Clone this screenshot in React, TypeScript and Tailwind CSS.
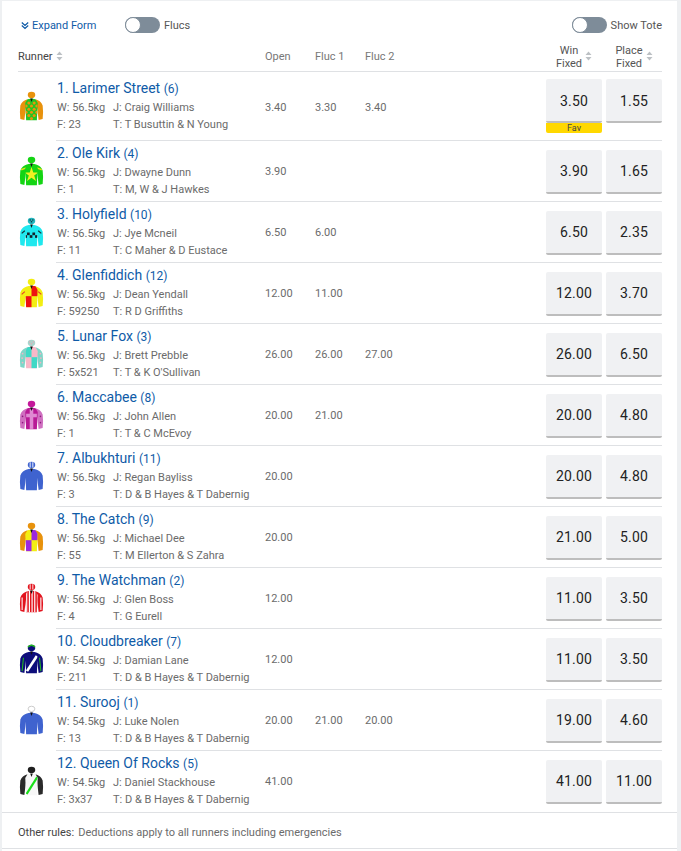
import React from 'react';

const BLUE = '#0f5ba7';

const Stripes = ({ color }: { color: string }) => (
  <>
    {[8, 11, 14, 17, 20].map((x) => (
      <rect key={x} x={x} y="8" width="1.3" height="26" fill={color} />
    ))}
  </>
);

const TORSO = 'M9.5 9 L14 8 L18.5 9 L21 13 L20 32.5 L8 32.5 L7 13 Z';

// racing silk: cap, two sleeves, torso; the torso pattern goes in as children
const Silk = ({ id, cap, capInner, body, sleeve, sleeveInner, children }: any) => (
  <svg width="25" height="31" viewBox="0 0 28 34" className="block ml-px">
    <clipPath id={`torso-${id}`}>
      <path d={TORSO} />
    </clipPath>
    <ellipse cx="14" cy="4" rx="4.2" ry="3.5" fill={cap} />
    {capInner}
    <path d="M9.5 9 Q3.5 10.5 1.5 16 Q0.5 24 1.5 31 L6 32 L7.5 20 Z" fill={sleeve} />
    <path d="M18.5 9 Q24.5 10.5 26.5 16 Q27.5 24 26.5 31 L22 32 L20.5 20 Z" fill={sleeve} />
    {sleeveInner}
    <path d={TORSO} fill={body} />
    <g clipPath={`url(#torso-${id})`}>{children}</g>
    <path d="M12.5 8 L15.5 8 L14 12 Z" fill="#111" />
  </svg>
);

const silks: Record<number, React.ReactNode> = {
  1: (
    <Silk id={1} cap="#e8920c" body="#22c522" sleeve="#e8920c">
      {[[11, 13], [17, 13], [14, 16.5], [8, 16.5], [20, 16.5], [11, 20], [17, 20], [14, 23.5], [8, 23.5], [20, 23.5], [11, 27], [17, 27], [14, 30.5]].map(([x, y]) => (
        <circle key={`${x}-${y}`} cx={x} cy={y} r="1.7" fill="#e8920c" />
      ))}
    </Silk>
  ),
  2: (
    <Silk
      id={2}
      cap="#14d414"
      body="#14d414"
      sleeve="#14d414"
      sleeveInner={<path d="M2.5 15 L8 13 M25.5 15 L20 13" stroke="#e6e01e" strokeWidth="1.6" />}
    >
      <polygon points="14,12 16,18 22,18 17,21.5 19,27.5 14,24 9,27.5 11,21.5 6,18 12,18" fill="#f0f022" />
    </Silk>
  ),
  3: (
    <Silk
      id={3}
      cap="#22b5bd"
      capInner={<g fill="#14343a"><circle cx="12.5" cy="3" r="0.9" /><circle cx="15.5" cy="3" r="0.9" /><circle cx="14" cy="5" r="0.9" /></g>}
      body="#1fe8ee"
      sleeve="#1fe8ee"
      sleeveInner={<path d="M3 18 L6.5 15 M25 18 L21.5 15" stroke="#14343a" strokeWidth="1.4" />}
    >
      <g fill="#14202a">
        <rect x="9" y="17" width="3" height="3" />
        <rect x="15" y="17" width="3" height="3" />
        <rect x="12" y="20" width="3" height="3" />
        <rect x="18" y="20" width="3" height="3" />
        <rect x="7" y="20" width="2" height="3" />
      </g>
    </Silk>
  ),
  4: (
    <Silk
      id={4}
      cap="#f3ee12"
      body="#f3ee12"
      sleeve="#f3ee12"
      sleeveInner={<path d="M3 18 L6.5 15 M25 18 L21.5 15" stroke="#e23b2a" strokeWidth="1.2" />}
    >
      <rect x="14" y="8" width="8" height="12" fill="#ee1111" />
      <rect x="6" y="20" width="8" height="13" fill="#ee1111" />
    </Silk>
  ),
  5: (
    <Silk
      id={5}
      cap="#a9d4cc"
      capInner={<g fill="#eaa6b6"><circle cx="12" cy="3" r="0.8" /><circle cx="16" cy="3" r="0.8" /><circle cx="14" cy="5" r="0.8" /></g>}
      body="#f8b8c8"
      sleeve="#7fd6c8"
      sleeveInner={<g fill="#f2b4c4"><circle cx="4" cy="16" r="1" /><circle cx="3.5" cy="21" r="1" /><circle cx="4" cy="26" r="1" /><circle cx="24" cy="16" r="1" /><circle cx="24.5" cy="21" r="1" /><circle cx="24" cy="26" r="1" /></g>}
    >
      <rect x="6" y="8" width="8" height="12" fill="#3fd9c6" />
      <rect x="14" y="20" width="8" height="13" fill="#3fd9c6" />
    </Silk>
  ),
  6: (
    <Silk
      id={6}
      cap="#c4189a"
      body="#b81a96"
      sleeve="#cf6fc0"
      sleeveInner={<g fill="#8e1a7e"><circle cx="4" cy="18" r="0.9" /><circle cx="4" cy="25" r="0.9" /><circle cx="24" cy="18" r="0.9" /><circle cx="24" cy="25" r="0.9" /></g>}
    >
      <rect x="12" y="10" width="4" height="22" fill="#df8ad2" />
      <rect x="8" y="15" width="12" height="4" fill="#df8ad2" />
    </Silk>
  ),
  7: (
    <Silk
      id={7}
      cap="#3f63cf"
      capInner={<path d="M12.5 1 V7 M15.5 1 V7" stroke="#fff" strokeWidth="1" />}
      body="#3f63cf"
      sleeve="#3f63cf"
    />
  ),
  8: (
    <Silk id={8} cap="#e8920c" body="#f3ee12" sleeve="#e8920c">
      <rect x="14" y="8" width="8" height="12" fill="#9c28e0" />
      <rect x="6" y="20" width="8" height="13" fill="#9c28e0" />
    </Silk>
  ),
  9: (
    <Silk
      id={9}
      cap="#e2141e"
      capInner={<path d="M12.5 1 V7 M15.5 1 V7" stroke="#fff" strokeWidth="1" />}
      body="#e2141e"
      sleeve="#e2141e"
      sleeveInner={<path d="M3.5 16 V30 M24.5 16 V30" stroke="#fff" strokeWidth="1.2" />}
    >
      <Stripes color="#fff" />
    </Silk>
  ),
  10: (
    <Silk
      id={10}
      cap="#0d0d7a"
      capInner={<path d="M10 3 Q14 -1 18 3" stroke="#22b522" strokeWidth="1.6" fill="none" />}
      body="#0d0d7a"
      sleeve="#0d0d7a"
      sleeveInner={<path d="M5 15 L3.5 30 M23 15 L24.5 30" stroke="#22b522" strokeWidth="1.2" />}
    >
      <path d="M20 13 L9 30" stroke="#fff" strokeWidth="3" />
    </Silk>
  ),
  11: (
    <Silk
      id={11}
      cap="#fff"
      capInner={<ellipse cx="14" cy="4" rx="3.8" ry="3" fill="#fff" stroke="#b8b8b8" strokeWidth="0.8" />}
      body="#3f63cf"
      sleeve="#3f63cf"
    />
  ),
  12: (
    <Silk id={12} cap="#1f1f1f" body="#f7f7f7" sleeve="#2a2a2a">
      <path d="M20.5 12 L8.5 31" stroke="#19e019" strokeWidth="2.6" />
    </Silk>
  ),
};

const runners = [
  { no: 1, name: 'Larimer Street', barrier: 6, w: '56.5', j: 'Craig Williams', f: '23', t: 'T Busuttin & N Young', open: '3.40', f1: '3.30', f2: '3.40', win: '3.50', place: '1.55', fav: true },
  { no: 2, name: 'Ole Kirk', barrier: 4, w: '56.5', j: 'Dwayne Dunn', f: '1', t: 'M, W & J Hawkes', open: '3.90', f1: '', f2: '', win: '3.90', place: '1.65' },
  { no: 3, name: 'Holyfield', barrier: 10, w: '56.5', j: 'Jye Mcneil', f: '11', t: 'C Maher & D Eustace', open: '6.50', f1: '6.00', f2: '', win: '6.50', place: '2.35' },
  { no: 4, name: 'Glenfiddich', barrier: 12, w: '56.5', j: 'Dean Yendall', f: '59250', t: 'R D Griffiths', open: '12.00', f1: '11.00', f2: '', win: '12.00', place: '3.70' },
  { no: 5, name: 'Lunar Fox', barrier: 3, w: '56.5', j: 'Brett Prebble', f: '5x521', t: "T & K O'Sullivan", open: '26.00', f1: '26.00', f2: '27.00', win: '26.00', place: '6.50' },
  { no: 6, name: 'Maccabee', barrier: 8, w: '56.5', j: 'John Allen', f: '1', t: 'T & C McEvoy', open: '20.00', f1: '21.00', f2: '', win: '20.00', place: '4.80' },
  { no: 7, name: 'Albukhturi', barrier: 11, w: '56.5', j: 'Regan Bayliss', f: '3', t: 'D & B Hayes & T Dabernig', open: '20.00', f1: '', f2: '', win: '20.00', place: '4.80' },
  { no: 8, name: 'The Catch', barrier: 9, w: '56.5', j: 'Michael Dee', f: '55', t: 'M Ellerton & S Zahra', open: '20.00', f1: '', f2: '', win: '21.00', place: '5.00' },
  { no: 9, name: 'The Watchman', barrier: 2, w: '56.5', j: 'Glen Boss', f: '4', t: 'G Eurell', open: '12.00', f1: '', f2: '', win: '11.00', place: '3.50' },
  { no: 10, name: 'Cloudbreaker', barrier: 7, w: '54.5', j: 'Damian Lane', f: '211', t: 'D & B Hayes & T Dabernig', open: '12.00', f1: '', f2: '', win: '11.00', place: '3.50' },
  { no: 11, name: 'Surooj', barrier: 1, w: '54.5', j: 'Luke Nolen', f: '13', t: 'D & B Hayes & T Dabernig', open: '20.00', f1: '21.00', f2: '20.00', win: '19.00', place: '4.60' },
  { no: 12, name: 'Queen Of Rocks', barrier: 5, w: '54.5', j: 'Daniel Stackhouse', f: '3x37', t: 'D & B Hayes & T Dabernig', open: '41.00', f1: '', f2: '', win: '41.00', place: '11.00' },
];

const SortIcon = () => (
  <svg width="7" height="10" viewBox="0 0 7 10" className="shrink-0 -mt-[2px]">
    <path d="M3.5 0.5 L6.5 4 H0.5 Z M3.5 9.5 L0.5 6 H6.5 Z" fill="#bcc0c4" />
  </svg>
);

const Toggle = ({ label }: { label: string }) => (
  <div className="flex items-center gap-1">
    <div className="w-[35px] h-4 rounded-full bg-[#7e8c99] relative">
      <div className="absolute left-0 top-0 w-4 h-4 rounded-full bg-white border border-[#7e8c99]" />
    </div>
    <span className="text-[11px] text-[#555] pt-[2px]">{label}</span>
  </div>
);

const PriceButton = ({ value }: { value: string }) => (
  <button className="w-14 h-[44px] pt-[2px] rounded-[2px] bg-[#f0f1f3] border-b-[2px] border-[#bdbdbd] text-[14px] text-[#222] tracking-[0.2px]">
    {value}
  </button>
);

const Row = ({ r }: any) => {
  const priceCol = `text-[11px] text-[#6b6b6b] ${r.fav ? 'pt-[21px]' : 'pt-[2px]'}`;
  return (
    <div className="flex">
      <div className="w-[38px] shrink-0 flex items-center">{silks[r.no]}</div>
      <div className={`flex-1 flex pl-px ${r.no === 12 ? 'pb-px' : 'border-b border-[#dfe1e4]'} ${r.fav ? 'pt-[7px] pb-[7px] items-start' : 'h-[61px] items-center'}`}>
        <div className="w-[208px] shrink-0">
          <div className="text-[14px] leading-[18px] text-[#0f5ba7] whitespace-nowrap">
            {r.no}. {r.name} <span className="text-[12px]">({r.barrier})</span>
          </div>
          <div className="text-[11px] leading-[17px] text-[#6b6b6b] mt-px">
            <div className="flex"><span className="w-14">W: {r.w}kg</span><span>J: {r.j}</span></div>
            <div className="flex"><span className="w-14">F: {r.f}</span><span>T: {r.t}</span></div>
          </div>
        </div>
        <div className={`w-[50px] ${priceCol}`}>{r.open}</div>
        <div className={`w-[50px] ${priceCol}`}>{r.f1}</div>
        <div className={`w-[181px] ${priceCol}`}>{r.f2}</div>
        <div className={`flex gap-1 ${r.fav ? '' : 'mt-px'}`}>
          <div className="flex flex-col">
            <PriceButton value={r.win} />
            {r.fav && <div className="h-[10px] bg-[#ffd800] rounded-b-[2px] text-[9px] leading-[10px] text-center text-[#444]">Fav</div>}
          </div>
          <PriceButton value={r.place} />
        </div>
      </div>
    </div>
  );
};

export default function App() {
  return (
    <div className="min-h-[851px] bg-[#eef0f2] pl-[2px] pr-1 pt-px" style={{ fontFamily: 'Roboto, sans-serif' }}>
      <div className="bg-white h-[850px]">
        <div className="pl-4 pr-[15px]">
          <div className="flex items-center h-[46px] pt-[2px]">
            <div className="flex items-center gap-1 w-[107px] text-[11px]" style={{ color: BLUE }}>
              <svg width="8" height="9" viewBox="0 0 8 9" fill="none" stroke={BLUE} strokeWidth="1.2" className="ml-[3px]">
                <path d="M0.8 1.5 L4 4.5 L7.2 1.5 M0.8 4.5 L4 7.5 L7.2 4.5" />
              </svg>
              <span className="-ml-px pt-[2px]">Expand Form</span>
            </div>
            <Toggle label="Flucs" />
            <div className="ml-auto"><Toggle label="Show Tote" /></div>
          </div>
          <div className="flex items-center h-[25px] pb-[4px] border-b border-[#dfe1e4] text-[11px] text-[#777]">
            <div className="w-[247px] flex items-center gap-[3px] text-[#444]">Runner <SortIcon /></div>
            <div className="w-[50px]">Open</div>
            <div className="w-[50px]">Fluc 1</div>
            <div className="w-[181px]">Fluc 2</div>
            <div className="w-14 flex items-center justify-center gap-[3px] text-[#555] leading-[13px] text-center"><span>Win<br />Fixed</span><SortIcon /></div>
            <div className="w-1" />
            <div className="w-14 flex items-center justify-center gap-[3px] text-[#555] leading-[13px] text-center"><span>Place<br />Fixed</span><SortIcon /></div>
          </div>
          {runners.map((r) => <Row key={r.no} r={r} />)}
        </div>
        <div className="border-y border-[#dfe1e4] h-[37px] pl-4 pt-[5px] flex items-center text-[11px] text-[#6b6b6b]">
          <span className="text-[#444] mr-1">Other rules:</span> Deductions apply to all runners including emergencies
        </div>
      </div>
    </div>
  );
}
